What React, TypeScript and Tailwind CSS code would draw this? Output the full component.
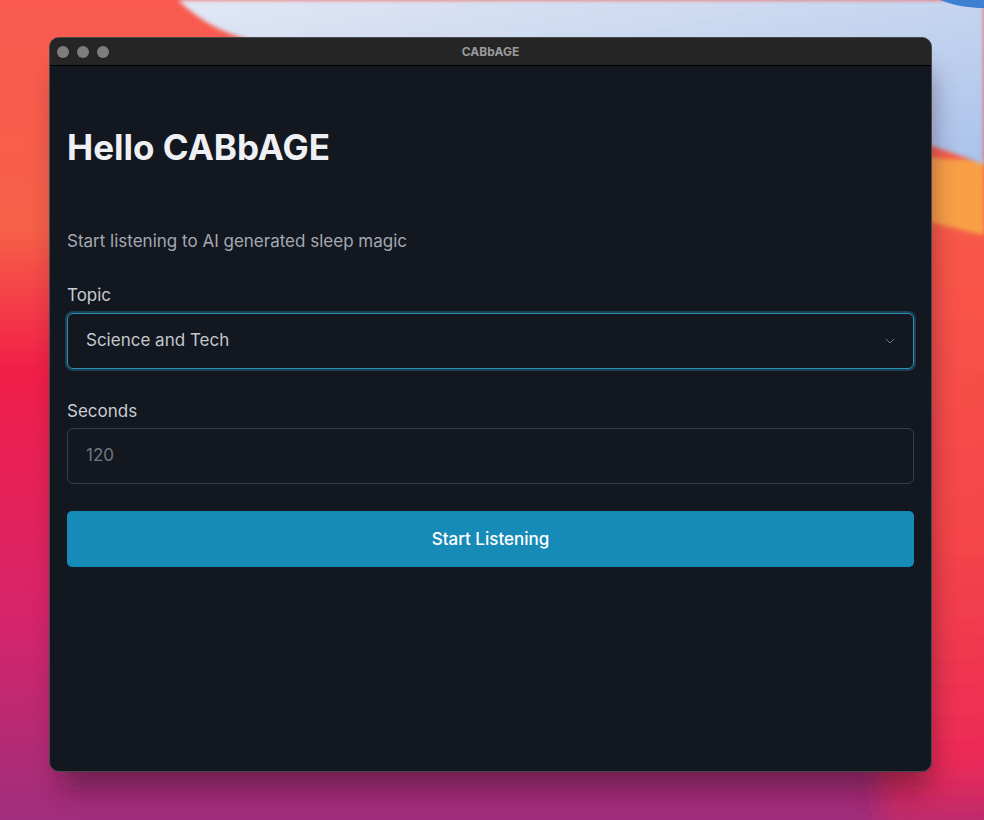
import { ChevronDown } from 'lucide-react';

const Wallpaper = () => (
  <svg className="absolute inset-0 w-full h-full" viewBox="0 0 984 820" preserveAspectRatio="none">
    <defs>
      <linearGradient id="base" x1="0" y1="0" x2="0" y2="1">
        <stop offset="0" stopColor="#f85a50" />
        <stop offset="0.28" stopColor="#f66048" />
        <stop offset="0.45" stopColor="#f21f48" />
        <stop offset="0.75" stopColor="#d7246a" />
        <stop offset="1" stopColor="#a02e7c" />
      </linearGradient>
      <linearGradient id="sky" x1="0" y1="0" x2="1" y2="1">
        <stop offset="0" stopColor="#e2e8f5" />
        <stop offset="1" stopColor="#a9c2ea" />
      </linearGradient>
      <linearGradient id="right" x1="0" y1="0" x2="0" y2="1">
        <stop offset="0" stopColor="#fb5a48" />
        <stop offset="0.55" stopColor="#f4444a" />
        <stop offset="0.85" stopColor="#ec2a55" />
        <stop offset="1" stopColor="#ec2456" stopOpacity="0" />
      </linearGradient>
      <filter id="soft">
        <feGaussianBlur stdDeviation="2" />
      </filter>
      <filter id="wide" x="-30%" y="-30%" width="160%" height="160%">
        <feGaussianBlur stdDeviation="12" />
      </filter>
      <filter id="shadow" x="-20%" y="-20%" width="140%" height="140%">
        <feGaussianBlur stdDeviation="14" />
      </filter>
    </defs>
    <rect width="984" height="820" fill="url(#base)" />
    <path d="M700 180 C800 210 900 230 1010 250 L1010 860 L880 860 L880 180 Z" fill="url(#right)" filter="url(#wide)" />
    <path d="M700 110 C800 140 900 160 984 160 L984 235 C900 215 800 190 700 150 Z" fill="#f9a046" filter="url(#soft)" />
    <path d="M178 0 C205 25 230 40 300 50 C500 70 800 90 984 165 L984 0 Z" fill="url(#sky)" filter="url(#soft)" />
    <path d="M940 0 C955 6 970 8 984 8 L984 0 Z" fill="#3d7fd0" />
    <rect x="60" y="70" width="870" height="720" rx="12" fill="#2a0a20" opacity="0.45" filter="url(#shadow)" />
  </svg>
);

export default function App() {
  return (
    <div
      className="relative w-[984px] h-[820px] overflow-hidden pt-[37px] pl-[49px]"
      style={{ fontFamily: 'Inter, "Noto Sans", sans-serif' }}
    >
      <Wallpaper />
      <div className="relative w-[883px] h-[735px] rounded-[10px] border border-[#4a4a4c] bg-[#13171f] overflow-hidden flex flex-col">
        <div className="h-[28px] shrink-0 bg-[#252525] border-b border-black flex items-center px-[7px] relative">
          <div className="flex gap-[8px]">
            <span className="w-[12px] h-[12px] rounded-full bg-[#7d7d7d]" />
            <span className="w-[12px] h-[12px] rounded-full bg-[#7d7d7d]" />
            <span className="w-[12px] h-[12px] rounded-full bg-[#7d7d7d]" />
          </div>
          <div className="absolute inset-0 flex items-center justify-center text-[12px] font-bold text-[#9a9a9a]">
            CABbAGE
          </div>
        </div>
        <div className="flex flex-col px-[17px] pt-[60px]">
          <h1 className="text-[35px] leading-[42px] font-bold text-[#eef0f3]">Hello CABbAGE</h1>
          <p className="mt-[61px] text-[17px] leading-[24px] text-[#a3a9b3]">
            Start listening to AI generated sleep magic
          </p>
          <label className="mt-[30px] text-[17px] leading-[24px] text-[#c9cdd3]">Topic</label>
          <div className="mt-[6px] h-[56px] rounded-[6px] border border-[#2b8fb6] ring-2 ring-[#1a4254] flex items-center justify-between pl-[18px] pr-[15px]">
            <span className="text-[17px] text-[#c3c7ce]">Science and Tech</span>
            <ChevronDown className="w-[16px] h-[16px] text-[#6b7280]" strokeWidth={1.5} />
          </div>
          <label className="mt-[30px] text-[17px] leading-[24px] text-[#c9cdd3]">Seconds</label>
          <div className="mt-[5px] h-[56px] rounded-[6px] border border-[#383d46] flex items-center pl-[18px]">
            <span className="text-[17px] text-[#707783]">120</span>
          </div>
          <button className="mt-[27px] h-[56px] rounded-[5px] bg-[#168bb8] text-white text-[17px] font-medium pt-[2px]">
            Start Listening
          </button>
        </div>
      </div>
    </div>
  );
}
